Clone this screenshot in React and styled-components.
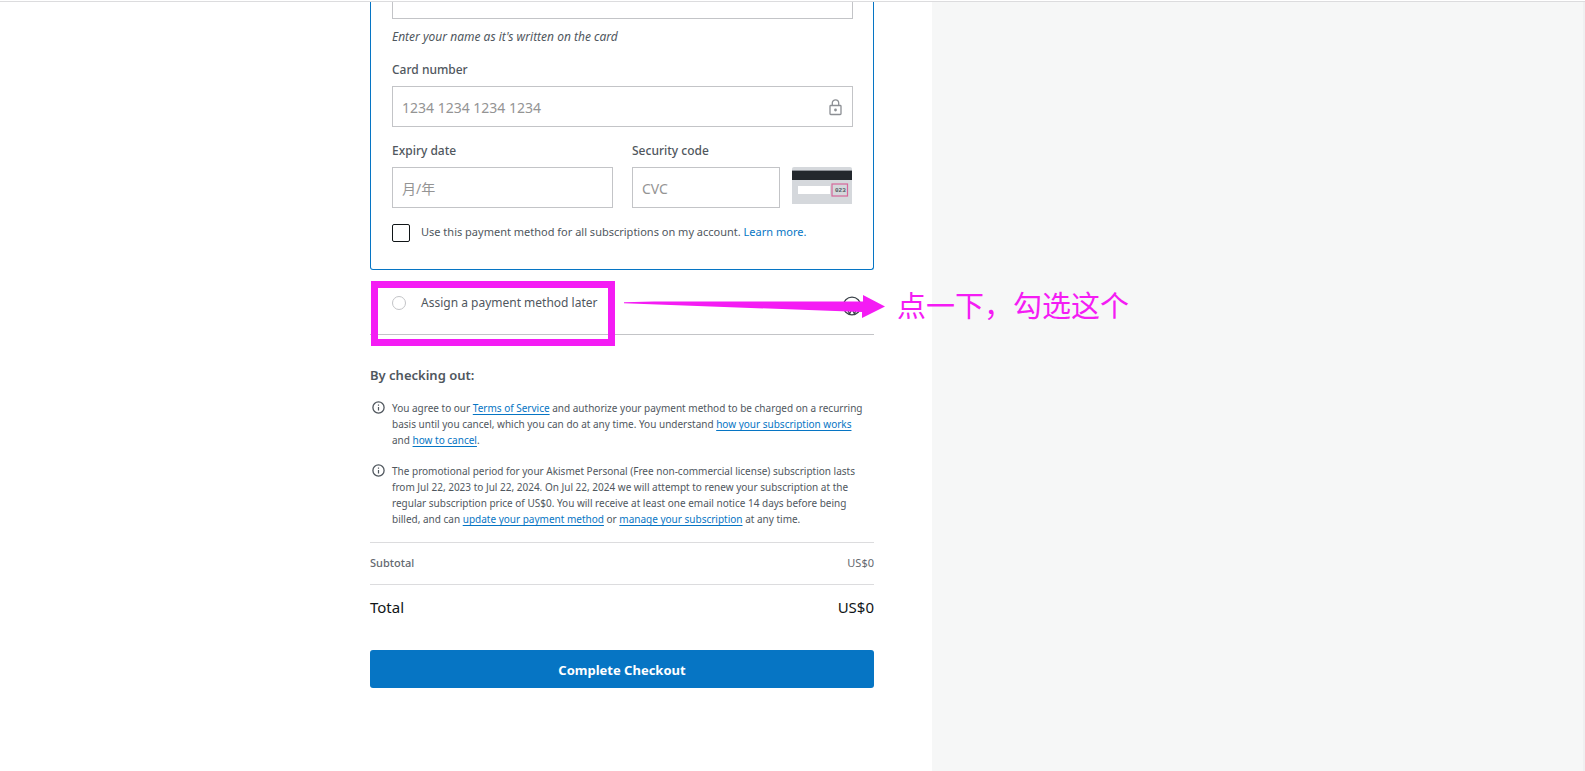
import React from 'react';
import styled, { createGlobalStyle } from 'styled-components';

const Global = createGlobalStyle`
  *, *::before, *::after { box-sizing: border-box; }
  body {
    margin: 0;
    background: #fff;
    color: #50575e;
    font-family: "Noto Sans", "Noto Sans CJK SC", sans-serif;
    font-size: 12px;
    line-height: 16px;
  }
  input, button { font-family: inherit; }
`;

const Page = styled.div`
  display: grid;
  grid-template-columns: minmax(0, 932fr) minmax(0, 653fr);
  min-height: 100vh;
  border-top: 1px solid #fff;
  position: relative;
  overflow: hidden;
  &::before {
    content: "";
    position: absolute;
    inset: 0 0 auto 0;
    border-top: 1px solid #dcdcde;
  }
`;

const Main = styled.main`
  display: flex;
  flex-direction: column;
  align-items: flex-end;
  padding-right: 58px;
`;

const Sidebar = styled.aside`
  background: #f6f7f7;
  border-right: 2px solid #f0f0f1;
`;

const Checkout = styled.form`
  width: 100%;
  max-width: 504px;
`;

const PaymentCard = styled.section`
  border: 1px solid #0675c4;
  border-top: 0;
  border-radius: 0 0 3px 3px;
  padding: 0 20px 27px 21px;
`;

const TextInput = styled.input`
  display: block;
  width: 100%;
  height: 41px;
  padding: 1px 9px 0;
  border: 1px solid #c3c4c7;
  border-radius: 0;
  background: #fff;
  color: #2c3338;
  font-size: 14px;
  outline: none;
  &::placeholder { color: #949494; opacity: 1; }
`;

const NameInput = styled(TextInput)`
  height: 18px;
  border-top: 0;
`;

const Hint = styled.p`
  margin: 10px 0 17px;
  font-size: 12px;
  font-style: italic;
`;

const Label = styled.label`
  display: block;
  margin-bottom: 8px;
  font-size: 12px;
  font-weight: 500;
`;

const LockedField = styled.div`
  position: relative;
  margin-bottom: 16px;
`;

const LockIcon = styled.svg`
  position: absolute;
  right: 11px;
  top: 13px;
`;

const FieldRow = styled.div`
  display: grid;
  grid-template-columns: 228fr 148fr 61px;
  column-gap: 12px;
  align-items: end;
  margin-bottom: 16px;
`;

const Field = styled.div`
  min-width: 0;
  padding-right: ${(p) => (p.$spaced ? '7px' : '0')};
`;

const CvcPicture = styled.svg`
  display: block;
  margin-bottom: 4px;
`;

const Choice = styled.div`
  display: flex;
  align-items: ${(p) => (p.$top ? 'flex-start' : 'center')};
  gap: 11px;
`;

const CheckBox = styled.input`
  appearance: none;
  width: 18px;
  height: 18px;
  margin: 0;
  border: 1px solid #101517;
  border-radius: 2px;
  background: #fff;
`;

const Radio = styled.input`
  appearance: none;
  width: 14px;
  height: 14px;
  margin: 0 4px 0 0;
  border: 1px solid #c3c4c7;
  border-radius: 50%;
  background: #fff;
`;

const ChoiceLabel = styled.label`
  font-size: ${(p) => (p.$large ? '12px' : '11px')};
`;

const Link = styled.a`
  color: #0675c4;
  text-decoration: ${(p) => (p.$plain ? 'none' : 'underline')};
  text-underline-offset: 2px;
`;

const LaterOption = styled.section`
  position: relative;
  height: 65px;
  padding: 25px 22px 0;
  border-bottom: 1px solid #c3c4c7;
`;

const PlanIcon = styled.svg`
  position: absolute;
  right: 12px;
  top: 26px;
`;

const Highlight = styled.div`
  position: absolute;
  left: 1px;
  top: 11px;
  width: 244px;
  height: 65px;
  border: 7px solid #f41cf4;
  pointer-events: none;
`;

const Arrow = styled.svg`
  position: absolute;
  left: 254px;
  top: 25px;
`;

const Note = styled.span`
  position: absolute;
  left: 527px;
  top: 14px;
  color: #f41cf4;
  font-family: "Noto Sans CJK SC", sans-serif;
  font-size: 29px;
  line-height: 40px;
  white-space: nowrap;
`;

const Heading = styled.h2`
  margin: 30px 0 15px;
  font-size: 13px;
  line-height: 20px;
  font-weight: 600;
`;

const Terms = styled.div`
  display: flex;
  gap: 7px;
  margin-bottom: 15px;
  padding-left: 2px;
  font-size: 10px;
  p { margin: 0; flex: 1; }
`;

const TermsIcon = styled.svg`
  flex: none;
  margin-top: 1px;
`;

const Line = styled.span`
  display: block;
  white-space: nowrap;
`;

const SumRow = styled.div`
  display: flex;
  justify-content: space-between;
  border-top: 1px solid #dcdcde;
  padding: ${(p) => (p.$total ? '12px 0 33px' : '12px 0 13px')};
  color: ${(p) => (p.$total ? '#101517' : '#646970')};
  font-size: ${(p) => (p.$total ? '15px' : '11px')};
  line-height: ${(p) => (p.$total ? '20px' : '16px')};
`;

const SumName = styled.span`
  font-weight: ${(p) => (p.$total ? '400' : '500')};
`;

const SubmitButton = styled.button`
  display: block;
  width: 100%;
  height: 38px;
  padding: 2px 0 0;
  border: 0;
  border-radius: 3px;
  background: #0675c4;
  color: #fff;
  font-size: 13px;
  font-weight: 700;
`;

const InfoIcon = () => (
  <TermsIcon width="13" height="13" viewBox="0 0 13 13" fill="none" stroke="#50575e" aria-hidden="true">
    <circle cx="6.5" cy="6.5" r="5.6" strokeWidth="1.3" />
    <path d="M6.5 6v3.5M6.5 3.5v1.2" strokeWidth="1.2" />
  </TermsIcon>
);

export default function App() {
  return (
    <>
      <Global />
      <Page>
        <Main>
          <Checkout onSubmit={(e) => e.preventDefault()}>
            <PaymentCard>
              <NameInput aria-label="Cardholder name" />
              <Hint>Enter your name as it's written on the card</Hint>
              <Label htmlFor="number">Card number</Label>
              <LockedField>
                <TextInput id="number" placeholder="1234 1234 1234 1234" />
                <LockIcon width="13" height="17" viewBox="0 0 13 17" fill="none" stroke="#8c8f94" aria-hidden="true">
                  <rect x="1" y="6.5" width="11" height="9" rx="0.8" strokeWidth="1.3" />
                  <path d="M3.3 6.5V4a3.2 3.2 0 0 1 6.4 0v2.5" strokeWidth="1.3" />
                  <circle cx="6.5" cy="11" r="1.4" fill="#8c8f94" stroke="none" />
                </LockIcon>
              </LockedField>
              <FieldRow>
                <Field $spaced>
                  <Label htmlFor="expiry">Expiry date</Label>
                  <TextInput id="expiry" placeholder="月/年" />
                </Field>
                <Field>
                  <Label htmlFor="cvc">Security code</Label>
                  <TextInput id="cvc" placeholder="CVC" />
                </Field>
                <CvcPicture width="60" height="37" viewBox="0 0 60 37" aria-hidden="true">
                  <path d="M0 37V2a2 2 0 0 1 2-2h56a2 2 0 0 1 2 2v35z" fill="#d5d8dc" />
                  <path d="M0 3h60v1H0z" fill="#8c9096" />
                  <path d="M0 4h60v9H0z" fill="#23282d" />
                  <path d="M6 19h32v8H6z" fill="#fff" />
                  <rect x="40" y="17" width="15.5" height="12" fill="none" stroke="#d6679a" strokeWidth="1.2" />
                  <text x="43" y="25" fontFamily="Liberation Mono, monospace" fontSize="6" fontWeight="700" fill="#50575e">023</text>
                </CvcPicture>
              </FieldRow>
              <Choice $top>
                <CheckBox type="checkbox" id="all" />
                <ChoiceLabel htmlFor="all">
                  Use this payment method for all subscriptions on my account. <Link $plain href="#learn">Learn more.</Link>
                </ChoiceLabel>
              </Choice>
            </PaymentCard>
            <LaterOption>
              <Choice>
                <Radio type="radio" id="later" />
                <ChoiceLabel $large htmlFor="later">Assign a payment method later</ChoiceLabel>
              </Choice>
              <PlanIcon width="20" height="20" viewBox="0 0 20 20" fill="none" stroke="#3c434a" strokeWidth="1.2" aria-hidden="true">
                <circle cx="10" cy="10" r="8.8" />
                <path d="M3 7l4.5 11M7.5 18L10 13l2.500 5L16.500 7" />
              </PlanIcon>
              <Highlight />
              <Arrow width="262" height="24" viewBox="0 0 262 24" fill="#f41cf4" aria-hidden="true">
                <path d="M0 7.300L30 6.500H239V0L261 11.500L238 23V17L0 8.300z" />
              </Arrow>
              <Note>点一下，勾选这个</Note>
            </LaterOption>
            <Heading>By checking out:</Heading>
            <Terms>
              <InfoIcon />
              <p>
                <Line>You agree to our <Link href="#tos">Terms of Service</Link> and authorize your payment method to be charged on a recurring</Line>
                <Line>basis until you cancel, which you can do at any time. You understand <Link href="#works">how your subscription works</Link></Line>
                <Line>and <Link href="#cancel">how to cancel</Link>.</Line>
              </p>
            </Terms>
            <Terms>
              <InfoIcon />
              <p>
                <Line>The promotional period for your Akismet Personal (Free non-commercial license) subscription lasts</Line>
                <Line>from Jul 22, 2023 to Jul 22, 2024. On Jul 22, 2024 we will attempt to renew your subscription at the</Line>
                <Line>regular subscription price of US$0. You will receive at least one email notice 14 days before being</Line>
                <Line>billed, and can <Link href="#update">update your payment method</Link> or <Link href="#manage">manage your subscription</Link> at any time.</Line>
              </p>
            </Terms>
            <SumRow><SumName>Subtotal</SumName><span>US$0</span></SumRow>
            <SumRow $total><SumName $total>Total</SumName><span>US$0</span></SumRow>
            <SubmitButton type="submit">Complete Checkout</SubmitButton>
          </Checkout>
        </Main>
        <Sidebar />
      </Page>
    </>
  );
}
